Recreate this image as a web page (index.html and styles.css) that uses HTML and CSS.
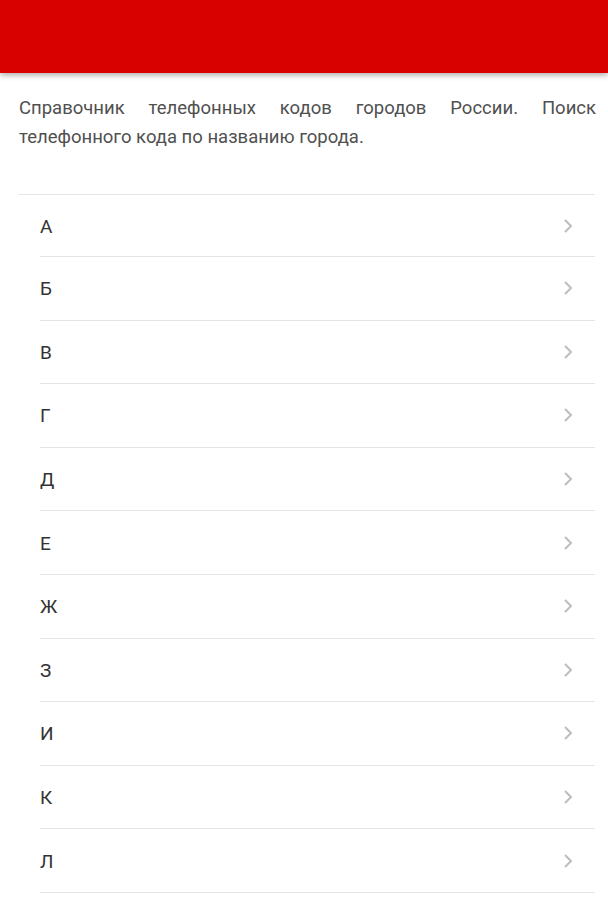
FILE: index.html
```html
<!DOCTYPE html>
<html lang="ru">
<head>
<meta charset="utf-8">
<link rel="stylesheet" href="styles.css">
</head>
<body>
<header class="topbar"></header>
<p class="intro">Справочник телефонных кодов городов России. Поиск телефонного кода по названию города.</p>
<ul class="letters">
  <li class="row"><span>А</span><svg class="chev" viewBox="0 0 10 16"><path d="M2 2l6 6-6 6"/></svg></li>
  <li class="row"><span>Б</span><svg class="chev" viewBox="0 0 10 16"><path d="M2 2l6 6-6 6"/></svg></li>
  <li class="row"><span>В</span><svg class="chev" viewBox="0 0 10 16"><path d="M2 2l6 6-6 6"/></svg></li>
  <li class="row"><span>Г</span><svg class="chev" viewBox="0 0 10 16"><path d="M2 2l6 6-6 6"/></svg></li>
  <li class="row"><span>Д</span><svg class="chev" viewBox="0 0 10 16"><path d="M2 2l6 6-6 6"/></svg></li>
  <li class="row"><span>Е</span><svg class="chev" viewBox="0 0 10 16"><path d="M2 2l6 6-6 6"/></svg></li>
  <li class="row"><span>Ж</span><svg class="chev" viewBox="0 0 10 16"><path d="M2 2l6 6-6 6"/></svg></li>
  <li class="row"><span>З</span><svg class="chev" viewBox="0 0 10 16"><path d="M2 2l6 6-6 6"/></svg></li>
  <li class="row"><span>И</span><svg class="chev" viewBox="0 0 10 16"><path d="M2 2l6 6-6 6"/></svg></li>
  <li class="row"><span>К</span><svg class="chev" viewBox="0 0 10 16"><path d="M2 2l6 6-6 6"/></svg></li>
  <li class="row"><span>Л</span><svg class="chev" viewBox="0 0 10 16"><path d="M2 2l6 6-6 6"/></svg></li>
</ul>
</body>
</html>
```
FILE: styles.css
```css
* { box-sizing: border-box; }
html, body { margin: 0; padding: 0; background: #fff; }
body {
  font-family: Roboto, "Noto Sans", sans-serif;
  color: #333;
  overflow: hidden;
  height: 900px;
}
.topbar {
  height: 73px;
  background: #d90000;
  box-shadow: 0 2px 6px rgba(0,0,0,0.35);
  position: relative;
  z-index: 1;
}
.intro {
  margin: 0;
  padding: 21px 12px 0 19px;
  font-size: 18.5px;
  line-height: 29px;
  color: #505050;
  text-align: justify;
}
.letters {
  list-style: none;
  margin: 42px 13px 0 19px;
  padding: 0;
  border-top: 1px solid #e4e4e4;
}
.row {
  margin-left: 21px;
  height: 63.6px;
  display: flex;
  align-items: center;
  justify-content: space-between;
  border-bottom: 1px solid #e4e4e4;
  font-size: 19px;
  color: #333;
  padding-right: 22px;
}
.row:first-child { height: 62px; }
.row span { padding-top: 1px; }
.chev {
  width: 10px;
  height: 16px;
  fill: none;
  stroke: #bdbdbd;
  stroke-width: 2;
}
```
